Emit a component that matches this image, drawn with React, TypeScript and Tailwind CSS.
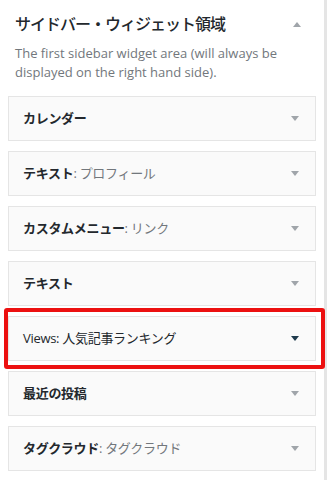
import React from 'react';

interface Widget {
  name: string;
  title?: string;
  active?: boolean;
  highlight?: boolean;
  plain?: boolean;
}

const WIDGETS: Widget[] = [
  { name: 'カレンダー' },
  { name: 'テキスト', title: 'プロフィール' },
  { name: 'カスタムメニュー', title: 'リンク' },
  { name: 'テキスト' },
  { name: 'Views: 人気記事ランキング', plain: true, active: true, highlight: true },
  { name: '最近の投稿' },
  { name: 'タグクラウド', title: 'タグクラウド' },
];

const FONT = { fontFamily: '"Open Sans", "Noto Sans CJK JP", sans-serif' };

function Arrow({ up = false, dark = false }: { up?: boolean; dark?: boolean }) {
  return (
    <svg width="8" height="5" viewBox="0 0 8 5" className="shrink-0">
      <polygon
        points={up ? '0,5 8,5 4,0' : '0,0 8,0 4,5'}
        fill={dark ? '#1f3b4d' : '#a0a5aa'}
      />
    </svg>
  );
}

function WidgetRow({ widget }: { widget: Widget }) {
  return (
    <div className="relative">
      <div className="h-[45px] flex items-center justify-between pl-[14px] pr-[16px] border border-[#e5e5e5] bg-[#fafafa]">
        <div className="text-[13px] text-[#23282d] tracking-[-0.3px]">
          <span className={widget.plain ? 'font-normal' : 'font-semibold'}>{widget.name}</span>
          {widget.title && <span className="font-normal text-[#72777c]">: {widget.title}</span>}
        </div>
        <Arrow dark={widget.active} />
      </div>
      {widget.highlight && (
        <div className="absolute left-[-4px] top-[-8px] right-[-9px] bottom-[-8px] border-4 border-[#ec1010] rounded-[3px] pointer-events-none" />
      )}
    </div>
  );
}

export default function App() {
  return (
    <div className="w-[327px] h-[480px] bg-white flex overflow-hidden" style={FONT}>
      <div className="w-[324px]">
        <div className="pl-[15px] pr-[23px] pt-[12px] flex items-center justify-between">
          <h2 className="text-[16px] leading-[24px] font-medium text-[#23282d] tracking-[-1px]">
            サイドバー・ウィジェット領域
          </h2>
          <Arrow up />
        </div>
        <p className="pl-[15px] pr-[30px] mt-[8px] text-[13px] leading-[19px] text-[#72777c]">
          The first sidebar widget area (will always be displayed on the right hand side).
        </p>
        <div className="mt-[14px] ml-[8px] w-[308px] flex flex-col gap-[10px]">
          {WIDGETS.map((w, i) => (
            <WidgetRow key={i} widget={w} />
          ))}
        </div>
      </div>
      <div className="w-[3px] bg-[#e5e5e5]" />
    </div>
  );
}
